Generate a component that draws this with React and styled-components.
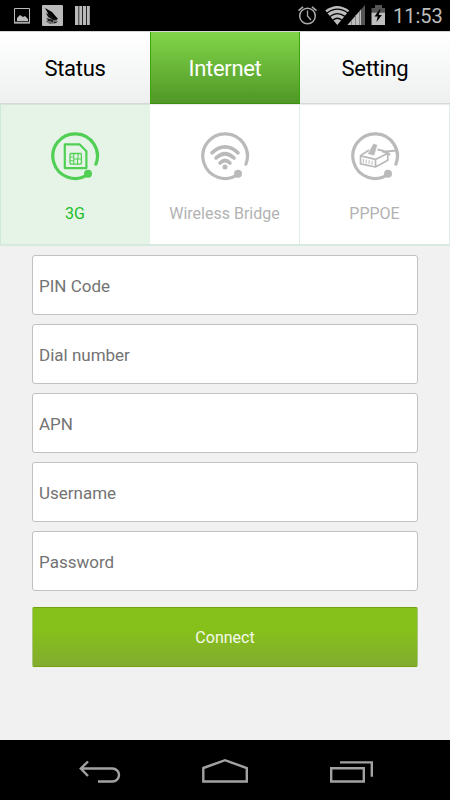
import React from "react";
import styled, { createGlobalStyle, css } from "styled-components";

const GlobalStyle = createGlobalStyle`
  * { box-sizing: border-box; }
  body { margin: 0; background: #f1f1f1; }
`;

const Screen = styled.div`
  width: 450px;
  height: 800px;
  display: flex;
  flex-direction: column;
  overflow: hidden;
  background: #f1f1f1;
  font-family: Roboto, "Liberation Sans", sans-serif;
`;

const StatusBar = styled.header`
  height: 31px;
  flex: none;
  display: flex;
  justify-content: space-between;
  background: #000;
`;

const Notifications = styled.svg`
  display: block;
  width: 100px;
  height: 31px;
`;

const SystemStatus = styled.div`
  display: flex;
  padding-right: 7px;
`;

const Indicators = styled.svg`
  display: block;
  width: 95px;
  height: 31px;
`;

const Clock = styled.time`
  width: 50px;
  color: #bdbdbd;
  font-size: 20px;
  line-height: 33px;
  white-space: nowrap;
`;

const TabBar = styled.nav`
  display: flex;
  flex: none;
  height: 73px;
  border-top: 1px solid #d4d4d4;
`;

const Tab = styled.button`
  flex: 0 0 150px;
  padding: 2px 0 0;
  border: 0;
  border-bottom: 1px solid #d5d8d6;
  background: linear-gradient(#fff, #eef0f0);
  color: #000;
  font: 22px Roboto, "Liberation Sans", sans-serif;
  letter-spacing: -0.3px;
  ${({ $active }) => $active && css`
    border-left: 1px solid #3ba60c;
    border-right: 1px solid #3ba60c;
    border-bottom-color: #3c8e10;
    background: linear-gradient(#82d549, #509727);
    color: #fff;
  `}
`;

const ModeBar = styled.section`
  display: flex;
  flex: none;
  height: 142px;
  border-bottom: 2px solid #d7eadf;
  box-shadow: inset 0 1px 0 #e9ecea;
  background: #fff;
`;

const Mode = styled.button`
  flex: 0 0 150px;
  display: flex;
  flex-direction: column;
  align-items: center;
  padding: 27px 0 0;
  border: 0;
  border-right: 1px solid #dff0e8;
  background: transparent;
  color: #b2b2b2;
  font: 16px Roboto, "Liberation Sans", sans-serif;
  ${({ $active }) => $active && css`
    border-right-color: #e6f4e8;
    border-left: 1px solid #d0e8d8;
    background: #e6f4e8;
    box-shadow: inset 0 1px 0 #d3e6d8;
    color: #1ebe28;
  `}
`;

const ModeIcon = styled.svg`
  display: block;
  width: 50px;
  height: 50px;
  flex: none;
  color: ${({ $active }) => ($active ? "#50cf54" : "#bababa")};
`;

const ModeLabel = styled.span`
  margin-top: 23px;
  line-height: 19px;
  white-space: nowrap;
`;

const Form = styled.form`
  flex: 1;
  display: flex;
  flex-direction: column;
  gap: 9px;
  padding: 9px 32px 0;
`;

const Field = styled.input`
  display: block;
  width: 100%;
  height: 60px;
  flex: none;
  padding: 1px 6px 0;
  border: 1px solid #c1c1c1;
  border-radius: 3px;
  background: #fff;
  outline: none;
  font: 17px Roboto, "Liberation Sans", sans-serif;
  &::placeholder { color: #737373; opacity: 1; }
`;

const Connect = styled.button`
  height: 60px;
  flex: none;
  margin-top: 7px;
  padding: 0;
  border: 1px solid #71a40a;
  border-left-color: #a8c77c;
  border-right-color: #a8c77c;
  border-radius: 2px;
  background: linear-gradient(#86c01a 0%, #86c01a 38%, #82ac30 100%);
  color: #f5faec;
  font: 16px Roboto, "Liberation Sans", sans-serif;
`;

const NavigationBar = styled.footer`
  height: 60px;
  flex: none;
  background: #000;
`;

const NavigationIcons = styled.svg`
  display: block;
  width: 450px;
  height: 60px;
`;

const Ring = () => (
  <>
    <path d="M45.9 33.2A22.3 22.3 0 1 0 38 43.3" fill="none" stroke="currentColor" strokeWidth="3.2" strokeLinecap="round" />
    <circle cx="38" cy="42.7" r="4" fill="currentColor" />
  </>
);

const SimGlyph = () => (
  <g fill="none" stroke="currentColor" strokeLinejoin="round">
    <path d="M14.8 13.3H29.5L36.4 20.2V37.1H14.8Z" strokeWidth="2.2" />
    <rect x="20" y="22.5" width="11.4" height="10.6" rx="1" strokeWidth="1.3" />
    <path d="M20 26h3.8M20 29.7h3.8M23.8 22.5v10.6M23.8 28H31.4M28 22.5V28M27.5 28v5.1" strokeWidth="1.1" />
  </g>
);

const WifiGlyph = () => (
  <g fill="none" stroke="currentColor" strokeWidth="3.6" strokeLinecap="round">
    <path d="M12 21.8Q25 10 38 21.8M16 27Q25 18.5 34 27M20 32Q25 27 30 32" />
    <circle cx="25" cy="36" r="2.5" fill="currentColor" stroke="none" />
  </g>
);

const PlugGlyph = () => (
  <g fill="none" stroke="currentColor" strokeWidth="1.7" strokeLinejoin="round">
    <path d="M19 19L10.5 24.8V32.8L25.5 36L37.8 29.2V22.3L32 20.4M10.5 24.8L25.5 28.4L37.8 22.3M25.5 28.4V36" />
    <path d="M13.3 28v4M16.2 28.6v4M19.1 29.2v4M22 29.8v4" strokeWidth="1" />
    <path d="M18.2 22.8L23.5 13L27 14L24 24.2Z" fill="currentColor" strokeWidth=".5" />
    <path d="M27.5 18.5L36.5 20.6L46.5 19.4M36.5 20.6L40 24" strokeWidth="2" />
  </g>
);

const modes = [
  { label: "3G", Glyph: SimGlyph, active: true },
  { label: "Wireless Bridge", Glyph: WifiGlyph },
  { label: "PPPOE", Glyph: PlugGlyph },
];

export default function App() {
  return (
    <>
      <GlobalStyle />
      <Screen>
        <StatusBar>
          <Notifications viewBox="0 0 100 31">
            <path d="M14.5 8.5h15v14h-15Z" fill="none" stroke="#bababa" />
            <path d="M14 22.7h16" stroke="#aaa" strokeWidth="2" />
            <path d="M17 21v-3l3-3 3 2 2-1 3 3v2Z" fill="#bdbdbd" />
            <rect x="42" y="5" width="21" height="21" rx="1" fill="#bababa" />
            <path d="M45 8l7 4 6 7-2 1-6-3Z" fill="#000" />
            <path d="M46 13l6 3 5 5-4-1-5-3ZM46 18l4 1 3 2-5-1Z" fill="#111" />
            <ellipse cx="52" cy="21.5" rx="5.5" ry="2.2" fill="#222" />
            <path d="M47 22h4m2-1h4m-6 2h3" stroke="#bababa" />
            <path d="M75 6h3.5v19H75ZM79.2 6h3v19h-3ZM83 6h3v19h-3ZM86.8 6h3v19h-3Z" fill="#bababa" />
          </Notifications>
          <SystemStatus>
            <Indicators viewBox="298 0 95 31">
              <g fill="none" stroke="#aaa">
                <circle cx="307.5" cy="16" r="7.8" strokeWidth="1.5" />
                <path d="M307.5 10.5V16l3.5 4" strokeWidth="1.3" />
                <path d="M298.5 10.7l4.5-3.8M312 6.9l4.5 3.8" strokeWidth="1.7" />
              </g>
              <path d="M325.3 10.5Q337 1.5 349.3 10.5L337.3 25Z" fill="#bebebe" />
              <g fill="none" stroke="#000" strokeWidth="1.3">
                <path d="M327 13Q337.3 5.2 348 13M330 16.4Q337.3 11 345 16.4M333 20Q337.3 16.5 341.7 20" />
              </g>
              <path d="M347.5 25L365 5V25Z" fill="#555" />
              <path d="M347.5 25L361 9.5V25Z" fill="#bebebe" />
              <path d="M351.5 20v5M355.5 15v10M359.5 11v14" stroke="#777" strokeWidth=".8" />
              <path d="M371.5 8h3.5V5h7v3h3v4.5h-13.5Z" fill="#555" />
              <path d="M371.5 12.5H385V25h-13.5Z" fill="#bebebe" />
              <path d="M379.5 9.5l-5 7h3.2l-1.3 5.5 5.5-7h-3.2l1.8-5.5Z" fill="#000" />
            </Indicators>
            <Clock>11:53</Clock>
          </SystemStatus>
        </StatusBar>
        <TabBar>
          <Tab>Status</Tab>
          <Tab $active>Internet</Tab>
          <Tab>Setting</Tab>
        </TabBar>
        <ModeBar>
          {modes.map(({ label, Glyph, active }) => (
            <Mode key={label} $active={active}>
              <ModeIcon $active={active} viewBox="0 0 50 50"><Ring /><Glyph /></ModeIcon>
              <ModeLabel>{label}</ModeLabel>
            </Mode>
          ))}
        </ModeBar>
        <Form onSubmit={(event) => event.preventDefault()}>
          {["PIN Code", "Dial number", "APN", "Username", "Password"].map((label) => (
            <Field key={label} placeholder={label} aria-label={label} type={label === "Password" ? "password" : "text"} />
          ))}
          <Connect type="submit">Connect</Connect>
        </Form>
        <NavigationBar>
          <NavigationIcons viewBox="0 740 450 60" fill="none" stroke="#a2a2a2" strokeWidth="2.4">
            <path d="M88 761.5L80.8 768.5L88 776M81 768.5H112.5A6.5 6.5 0 0 1 112.5 781.5H98" />
            <path d="M203.3 768L225 760.2L246.8 768V781.5H203.3Z" />
            <path d="M331.2 768.3H363.8V781.5H331.2ZM340 762.4H371.8V776.7" />
          </NavigationIcons>
        </NavigationBar>
      </Screen>
    </>
  );
}
